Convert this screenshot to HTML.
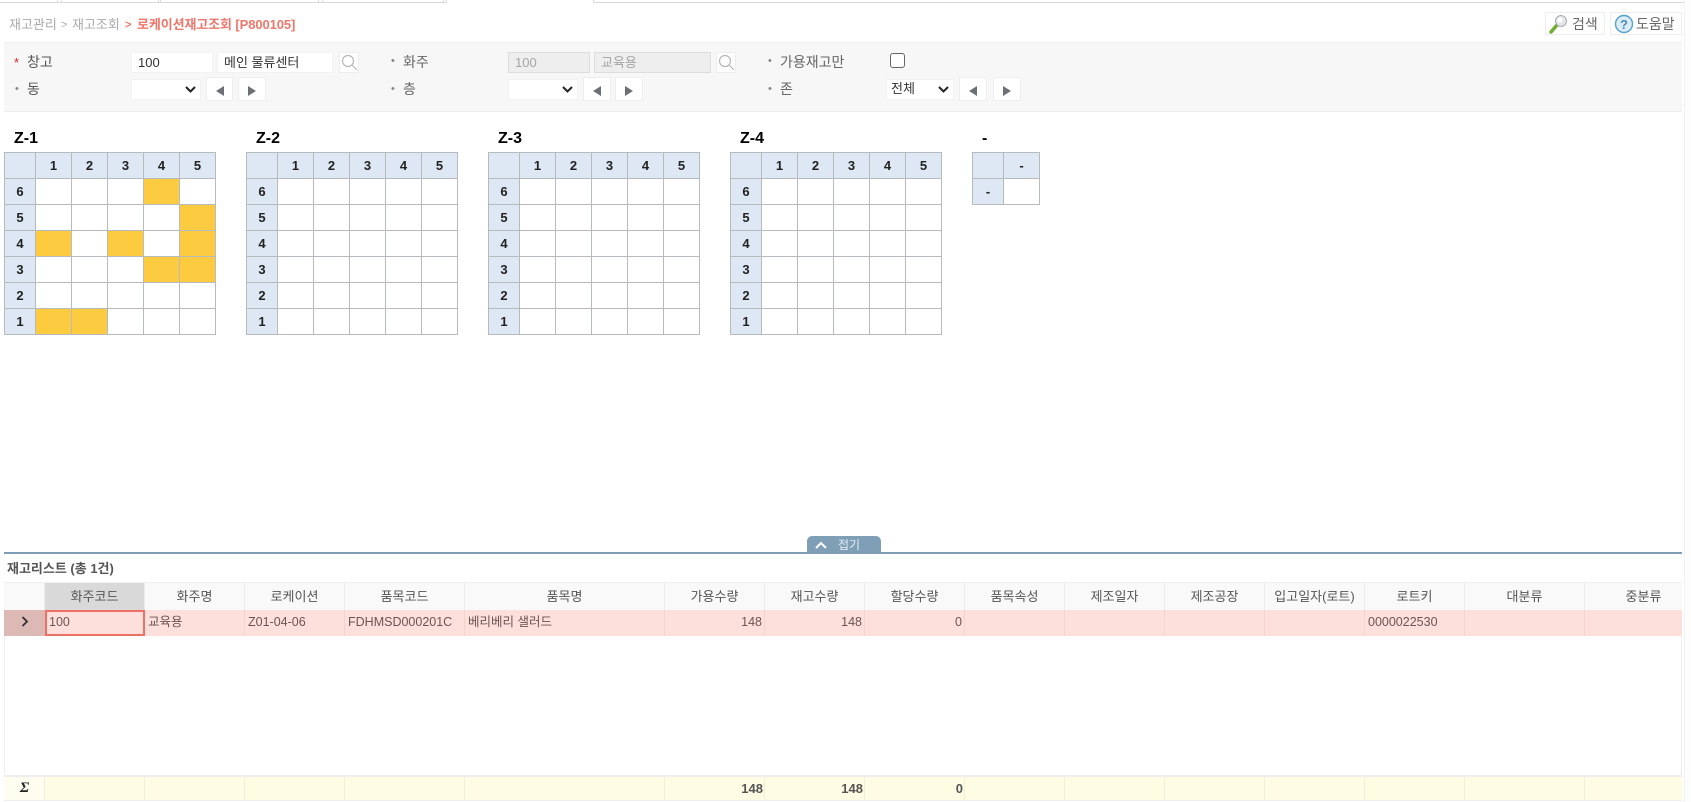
<!DOCTYPE html>
<html lang="ko"><head><meta charset="utf-8"><title>로케이션재고조회</title>
<style>
html,body{margin:0;padding:0;background:#fff;width:1691px;height:802px;overflow:hidden}
body{position:relative;font-family:"Liberation Sans","Noto Sans CJK KR",sans-serif;font-size:13px;color:#444}
.a{position:absolute;box-sizing:border-box}
.t{position:absolute;white-space:nowrap;line-height:18px}
.box{position:absolute;box-sizing:border-box;background:#fff;border:1px solid #eee}
.inp{padding:0 6px;line-height:19px;color:#333;font-size:13px}
.dis{background:#eee;border-color:#ddd;color:#a5a5a5}
.sel svg{position:absolute;right:4px;top:6px}
.arr svg{position:absolute;left:9px;top:8px}
.map{position:absolute;top:152px;border-collapse:collapse;table-layout:fixed;font-size:13px;font-weight:bold;color:#222}
.map td{height:25px;padding:1px 0 0;border:1px solid #b8bbbe;text-align:center;box-sizing:border-box;line-height:14px}
.map .h{background:#dde8f4}
.map .y{background:#fdcb40}
.ttl{position:absolute;top:129px;font-size:16px;font-weight:bold;color:#000;line-height:20px}
.g{position:absolute;left:4px;width:1678px;display:flex;box-sizing:border-box}
.g div{box-sizing:border-box;flex:none;white-space:nowrap;overflow:hidden}
.hd{top:582px;height:28px;background:#f9f9f9;border-top:1px solid #f0f0f0}
.hd div{text-align:center;line-height:27px;border-right:1px solid #ececec;color:#555}
.rw{top:610px;height:26px;background:#fddfdb}
.rw div{line-height:25px;padding:0 3px;border-right:1px solid #f6d3cf;color:#6b5553;font-size:12.5px}
.rw .r{text-align:right;padding-right:2px}
.ft{top:775px;height:26px;background:#fefde4;border-top:2px solid #eee;border-bottom:1px solid #eee}
.ft div{line-height:23px;padding:0 1px;text-align:right;border-right:1px solid #efefe0;font-weight:bold;color:#555}
</style></head><body>

<!-- top tabs -->
<div class="a" style="left:0;top:0;width:446px;height:3px;border-bottom:1px solid #d8d8d8"></div>
<div class="a" style="left:593px;top:0;width:1091px;height:3px;border-bottom:1px solid #d8d8d8;border-left:1px solid #d8d8d8"></div>
<div class="a" style="left:57px;top:0;width:1px;height:3px;background:#ddd"></div>
<div class="a" style="left:61px;top:0;width:1px;height:3px;background:#ddd"></div>
<div class="a" style="left:158px;top:0;width:1px;height:3px;background:#ddd"></div>
<div class="a" style="left:160px;top:0;width:1px;height:3px;background:#ddd"></div>
<div class="a" style="left:318px;top:0;width:1px;height:3px;background:#ddd"></div>
<div class="a" style="left:322px;top:0;width:1px;height:3px;background:#ddd"></div>
<div class="a" style="left:443px;top:0;width:1px;height:3px;background:#ddd"></div>
<div class="a" style="left:446px;top:0;width:1px;height:3px;background:#ddd"></div>
<div class="a" style="left:1684px;top:0;width:7px;height:802px;background:#fdfdfd;border-left:1px solid #f2f2f2"></div>

<!-- breadcrumb -->
<span class="t" style="left:9px;top:16px;color:#aaa">재고관리</span>
<span class="t" style="left:61px;top:16px;color:#aaa;font-size:11px">&gt;</span>
<span class="t" style="left:72px;top:16px;color:#aaa">재고조회</span>
<span class="t" style="left:125px;top:16px;color:#ef766b;font-size:11px;font-weight:bold">&gt;</span>
<span class="t" style="left:137px;top:16px;color:#ef766b;font-weight:bold;letter-spacing:-.1px">로케이션재고조회 [P800105]</span>

<!-- top buttons -->
<div class="box" style="left:1545px;top:12px;width:60px;height:23px">
<svg width="20" height="20" style="position:absolute;left:2px;top:1px" viewBox="0 0 20 20"><line x1="3" y1="18" x2="9" y2="11" stroke="#6fae2e" stroke-width="3.5" stroke-linecap="round"/><circle cx="13" cy="7" r="5.5" fill="#e4e6e8" stroke="#a8aeb3"/><circle cx="12" cy="6" r="2.5" fill="#fff"/></svg>
<span class="t" style="left:26px;top:2px;font-size:14px;color:#666">검색</span></div>
<div class="box" style="left:1610px;top:12px;width:72px;height:23px">
<svg width="20" height="20" style="position:absolute;left:3px;top:1px" viewBox="0 0 20 20"><circle cx="10" cy="10" r="8.5" fill="#dcecf6" stroke="#5a9fc9" stroke-width="1.4"/><text x="10" y="15" font-size="13" font-weight="bold" text-anchor="middle" fill="#4a8dbb" font-family="Liberation Sans">?</text></svg>
<span class="t" style="left:25px;top:2px;font-size:14px;color:#666">도움말</span></div>

<!-- search panel -->
<div class="a" style="left:4px;top:42px;width:1678px;height:70px;background:#f7f7f7;border-top:1px solid #eee;border-bottom:1px solid #eee"></div>

<span class="t" style="left:14px;top:54px;color:#d22">*</span>
<span class="t" style="left:27px;top:53px;font-size:14px;color:#555">창고</span>
<span class="t" style="left:15px;top:80px;color:#888;font-size:11px">•</span>
<span class="t" style="left:27px;top:80px;font-size:14px;color:#555">동</span>
<div class="box inp" style="left:131px;top:52px;width:82px;height:21px;border-color:#f2f2f2">100</div>
<div class="box inp" style="left:217px;top:52px;width:116px;height:21px;border-color:#f2f2f2">메인 물류센터</div>
<div class="box" style="left:339px;top:52px;width:20px;height:21px"><svg width="17" height="17" style="position:absolute;left:1px;top:1px" viewBox="0 0 17 17" fill="none" stroke="#b5b8ba" stroke-width="1.2"><circle cx="7" cy="7" r="5.5"/><path d="M11 11l5 5"/></svg></div>
<div class="box sel" style="left:131px;top:79px;width:70px;height:21px;border-color:#f2f2f2"><svg width="11" height="7" viewBox="0 0 11 7"><path d="M1 1l4.5 4.5L10 1" fill="none" stroke="#222" stroke-width="2"/></svg></div>
<div class="box arr" style="left:206px;top:77px;width:27px;height:24px"><svg width="8" height="10" viewBox="0 0 8 10"><path d="M8 0v10L0 5z" fill="#6b7075"/></svg></div>
<div class="box arr" style="left:238px;top:77px;width:28px;height:24px"><svg width="8" height="10" viewBox="0 0 8 10"><path d="M0 0v10L8 5z" fill="#6b7075"/></svg></div>

<span class="t" style="left:391px;top:52px;color:#888;font-size:11px">•</span>
<span class="t" style="left:403px;top:53px;font-size:14px;color:#666">화주</span>
<span class="t" style="left:391px;top:80px;color:#888;font-size:11px">•</span>
<span class="t" style="left:403px;top:80px;font-size:14px;color:#666">층</span>
<div class="box inp dis" style="left:508px;top:52px;width:82px;height:21px">100</div>
<div class="box inp dis" style="left:594px;top:52px;width:117px;height:21px">교육용</div>
<div class="box" style="left:716px;top:52px;width:20px;height:21px"><svg width="17" height="17" style="position:absolute;left:1px;top:1px" viewBox="0 0 17 17" fill="none" stroke="#b5b8ba" stroke-width="1.2"><circle cx="7" cy="7" r="5.5"/><path d="M11 11l5 5"/></svg></div>
<div class="box sel" style="left:508px;top:79px;width:70px;height:21px;border-color:#f2f2f2"><svg width="11" height="7" viewBox="0 0 11 7"><path d="M1 1l4.5 4.5L10 1" fill="none" stroke="#222" stroke-width="2"/></svg></div>
<div class="box arr" style="left:583px;top:77px;width:28px;height:24px"><svg width="8" height="10" viewBox="0 0 8 10"><path d="M8 0v10L0 5z" fill="#6b7075"/></svg></div>
<div class="box arr" style="left:615px;top:77px;width:28px;height:24px"><svg width="8" height="10" viewBox="0 0 8 10"><path d="M0 0v10L8 5z" fill="#6b7075"/></svg></div>

<span class="t" style="left:768px;top:52px;color:#888;font-size:11px">•</span>
<span class="t" style="left:780px;top:53px;font-size:14px;color:#666">가용재고만</span>
<span class="t" style="left:768px;top:80px;color:#888;font-size:11px">•</span>
<span class="t" style="left:780px;top:80px;font-size:14px;color:#666">존</span>
<div class="a" style="left:890px;top:53px;width:15px;height:15px;background:#fff;border:1px solid #666;border-radius:3px"></div>
<div class="box sel" style="left:886px;top:79px;width:68px;height:21px;border-color:#f2f2f2"><span class="t" style="left:4px;top:0;color:#333">전체</span><svg width="11" height="7" viewBox="0 0 11 7"><path d="M1 1l4.5 4.5L10 1" fill="none" stroke="#222" stroke-width="2"/></svg></div>
<div class="box arr" style="left:959px;top:77px;width:28px;height:24px"><svg width="8" height="10" viewBox="0 0 8 10"><path d="M8 0v10L0 5z" fill="#6b7075"/></svg></div>
<div class="box arr" style="left:993px;top:77px;width:28px;height:24px"><svg width="8" height="10" viewBox="0 0 8 10"><path d="M0 0v10L8 5z" fill="#6b7075"/></svg></div>

<!-- maps -->
<div class="ttl" style="left:14px">Z-1</div>
<table class="map" style="left:4px;width:212px"><colgroup><col style="width:31px"><col style="width:36px"><col style="width:36px"><col style="width:36px"><col style="width:36px"><col style="width:36px"></colgroup>
<tr style="height:26px"><td class="h"></td><td class="h">1</td><td class="h">2</td><td class="h">3</td><td class="h">4</td><td class="h">5</td></tr>
<tr style="height:26px"><td class="h">6</td><td></td><td></td><td></td><td class="y"></td><td></td></tr>
<tr style="height:26px"><td class="h">5</td><td></td><td></td><td></td><td></td><td class="y"></td></tr>
<tr style="height:26px"><td class="h">4</td><td class="y"></td><td></td><td class="y"></td><td></td><td class="y"></td></tr>
<tr style="height:26px"><td class="h">3</td><td></td><td></td><td></td><td class="y"></td><td class="y"></td></tr>
<tr style="height:26px"><td class="h">2</td><td></td><td></td><td></td><td></td><td></td></tr>
<tr style="height:26px"><td class="h">1</td><td class="y"></td><td class="y"></td><td></td><td></td><td></td></tr>
</table>

<div class="ttl" style="left:256px">Z-2</div>
<table class="map" style="left:246px;width:212px"><colgroup><col style="width:31px"><col style="width:36px"><col style="width:36px"><col style="width:36px"><col style="width:36px"><col style="width:36px"></colgroup>
<tr style="height:26px"><td class="h"></td><td class="h">1</td><td class="h">2</td><td class="h">3</td><td class="h">4</td><td class="h">5</td></tr>
<tr style="height:26px"><td class="h">6</td><td></td><td></td><td></td><td></td><td></td></tr>
<tr style="height:26px"><td class="h">5</td><td></td><td></td><td></td><td></td><td></td></tr>
<tr style="height:26px"><td class="h">4</td><td></td><td></td><td></td><td></td><td></td></tr>
<tr style="height:26px"><td class="h">3</td><td></td><td></td><td></td><td></td><td></td></tr>
<tr style="height:26px"><td class="h">2</td><td></td><td></td><td></td><td></td><td></td></tr>
<tr style="height:26px"><td class="h">1</td><td></td><td></td><td></td><td></td><td></td></tr>
</table>

<div class="ttl" style="left:498px">Z-3</div>
<table class="map" style="left:488px;width:212px"><colgroup><col style="width:31px"><col style="width:36px"><col style="width:36px"><col style="width:36px"><col style="width:36px"><col style="width:36px"></colgroup>
<tr style="height:26px"><td class="h"></td><td class="h">1</td><td class="h">2</td><td class="h">3</td><td class="h">4</td><td class="h">5</td></tr>
<tr style="height:26px"><td class="h">6</td><td></td><td></td><td></td><td></td><td></td></tr>
<tr style="height:26px"><td class="h">5</td><td></td><td></td><td></td><td></td><td></td></tr>
<tr style="height:26px"><td class="h">4</td><td></td><td></td><td></td><td></td><td></td></tr>
<tr style="height:26px"><td class="h">3</td><td></td><td></td><td></td><td></td><td></td></tr>
<tr style="height:26px"><td class="h">2</td><td></td><td></td><td></td><td></td><td></td></tr>
<tr style="height:26px"><td class="h">1</td><td></td><td></td><td></td><td></td><td></td></tr>
</table>

<div class="ttl" style="left:740px">Z-4</div>
<table class="map" style="left:730px;width:212px"><colgroup><col style="width:31px"><col style="width:36px"><col style="width:36px"><col style="width:36px"><col style="width:36px"><col style="width:36px"></colgroup>
<tr style="height:26px"><td class="h"></td><td class="h">1</td><td class="h">2</td><td class="h">3</td><td class="h">4</td><td class="h">5</td></tr>
<tr style="height:26px"><td class="h">6</td><td></td><td></td><td></td><td></td><td></td></tr>
<tr style="height:26px"><td class="h">5</td><td></td><td></td><td></td><td></td><td></td></tr>
<tr style="height:26px"><td class="h">4</td><td></td><td></td><td></td><td></td><td></td></tr>
<tr style="height:26px"><td class="h">3</td><td></td><td></td><td></td><td></td><td></td></tr>
<tr style="height:26px"><td class="h">2</td><td></td><td></td><td></td><td></td><td></td></tr>
<tr style="height:26px"><td class="h">1</td><td></td><td></td><td></td><td></td><td></td></tr>
</table>

<div class="ttl" style="left:982px">-</div>
<table class="map" style="left:972px;width:68px"><colgroup><col style="width:31px"><col style="width:36px"></colgroup>
<tr style="height:26px"><td class="h"></td><td class="h">-</td></tr>
<tr style="height:26px"><td class="h">-</td><td></td></tr>
</table>

<!-- splitter -->
<div class="a" style="left:4px;top:552px;width:1678px;height:2px;background:#7e9fb6"></div>
<div class="a" style="left:807px;top:536px;width:74px;height:17px;background:#7e9fb6;border-radius:5px 5px 0 0">
<svg width="12" height="8" viewBox="0 0 12 8" style="position:absolute;left:8px;top:5px"><path d="M1 7l5-5 5 5" fill="none" stroke="#fff" stroke-width="2"/></svg>
<span class="t" style="left:31px;top:0;color:#e4edf3;font-size:12px">접기</span></div>

<div class="t" style="left:7px;top:560px;font-weight:bold;color:#555">재고리스트 (총 1건)</div>

<!-- grid -->
<div class="a" style="left:4px;top:582px;width:1678px;height:219px;border-left:1px solid #eee;border-right:1px solid #eee"></div>
<div class="g hd">
<div style="width:41px"></div>
<div style="width:100px;background:#d9d9d9">화주코드</div>
<div style="width:100px">화주명</div>
<div style="width:100px">로케이션</div>
<div style="width:120px">품목코드</div>
<div style="width:200px">품목명</div>
<div style="width:100px">가용수량</div>
<div style="width:100px">재고수량</div>
<div style="width:100px">할당수량</div>
<div style="width:100px">품목속성</div>
<div style="width:100px">제조일자</div>
<div style="width:100px">제조공장</div>
<div style="width:100px">입고일자(로트)</div>
<div style="width:100px">로트키</div>
<div style="width:120px">대분류</div>
<div style="width:97px;border-right:0;padding-left:20px">중분류</div>
</div>
<div class="g rw">
<div style="width:41px;background:#dcb9b5;text-align:center;border:0;color:#333"><svg width="8" height="11" viewBox="0 0 8 11" style="vertical-align:-1px"><path d="M1.5 1l4.5 4.5L1.5 10" fill="none" stroke="#333" stroke-width="1.8"/></svg></div>
<div style="width:100px;border:2px solid #ee6f64;line-height:21px;padding:0 2px">100</div>
<div style="width:100px">교육용</div>
<div style="width:100px">Z01-04-06</div>
<div style="width:120px">FDHMSD000201C</div>
<div style="width:200px">베리베리 샐러드</div>
<div style="width:100px" class="r">148</div>
<div style="width:100px" class="r">148</div>
<div style="width:100px" class="r">0</div>
<div style="width:100px"></div>
<div style="width:100px"></div>
<div style="width:100px"></div>
<div style="width:100px"></div>
<div style="width:100px">0000022530</div>
<div style="width:120px"></div>
<div style="width:97px;border-right:0"></div>
</div>
<div class="g ft">
<div style="width:41px;background:#fefdf0;text-align:center;padding:0 0 0 1px;font-family:'Liberation Serif',serif;font-style:italic;font-weight:bold;color:#222;font-size:15px">Σ</div>
<div style="width:100px"></div>
<div style="width:100px"></div>
<div style="width:100px"></div>
<div style="width:120px"></div>
<div style="width:200px"></div>
<div style="width:100px">148</div>
<div style="width:100px">148</div>
<div style="width:100px">0</div>
<div style="width:100px"></div>
<div style="width:100px"></div>
<div style="width:100px"></div>
<div style="width:100px"></div>
<div style="width:100px"></div>
<div style="width:120px"></div>
<div style="width:97px;border-right:0"></div>
</div>
</body></html>
